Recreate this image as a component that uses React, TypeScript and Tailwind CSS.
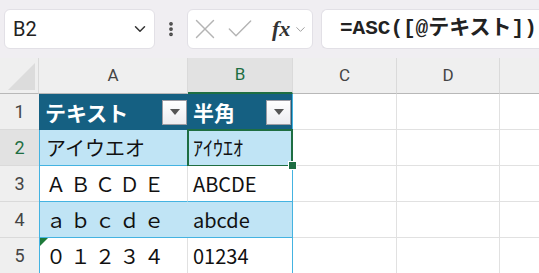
import { ChevronDown, EllipsisVertical, X, Check } from "lucide-react";

const jp = "font-['Noto_Sans_CJK_JP','Noto_Sans',sans-serif]";
const ui = "font-['Roboto','Noto_Sans',sans-serif]";

const rows = [
  { a: "アイウエオ", b: "ｱｲｳｴｵ", band: true },
  { a: "Ａ Ｂ Ｃ Ｄ Ｅ", b: "ABCDE", band: false },
  { a: "ａ ｂ ｃ ｄ ｅ", b: "abcde", band: true },
  { a: "０ １ ２ ３ ４", b: "01234", band: false },
];

function FilterButton() {
  return (
    <div className="w-[25px] h-[25px] border border-[#9c9ca4] bg-gradient-to-b from-white to-[#ececf0] flex items-center justify-center shrink-0">
      <svg width="10" height="6" viewBox="0 0 10 6">
        <path d="M0 0 L10 0 L5 6 Z" fill="#555" />
      </svg>
    </div>
  );
}

function Toolbar() {
  return (
    <div className="h-[58px] bg-[#f0eef2] flex items-center pl-1">
      {/* Name box */}
      <div className="w-[151px] h-[40px] shrink-0 bg-white rounded-md border border-[#e2e0e6] flex items-center justify-between pl-2 pr-[5px]">
        <span className={`${ui} text-[20px] text-[#222]`}>B2</span>
        <ChevronDown size={18} strokeWidth={2} className="text-[#333]" />
      </div>
      <EllipsisVertical size={18} strokeWidth={3} className="text-[#444] ml-[7px] shrink-0" />
      {/* Cancel / enter / fx */}
      <div className="w-[126px] h-[40px] ml-[7px] bg-white rounded-md border border-[#e2e0e6] flex items-center shrink-0">
        <X size={34} strokeWidth={1} className="text-[#b4b4b4] shrink-0" />
        <Check size={32} strokeWidth={1.05} className="text-[#b4b4b4] ml-[2px] shrink-0" />
        <span className="font-['Liberation_Serif',serif] italic font-bold text-[22px] text-[#333] ml-[16px] leading-none">fx</span>
        <ChevronDown size={15} strokeWidth={1.5} className="text-[#999] ml-[3px] shrink-0" />
      </div>
      {/* Formula bar */}
      <div className="flex-1 h-[40px] ml-[8px] bg-white rounded-l-md border border-r-0 border-[#e2e0e6] flex items-center pl-[18px] overflow-hidden">
        <span className="font-['Liberation_Mono','Noto_Sans_CJK_JP',monospace] font-semibold text-[21px] text-[#222] whitespace-nowrap">
          =ASC([@テキスト])
        </span>
      </div>
    </div>
  );
}

function ColumnHeaders() {
  const cols = [
    { l: "A", w: "w-[149px]", active: false },
    { l: "B", w: "w-[105px]", active: true },
    { l: "C", w: "w-[104px]", active: false },
    { l: "D", w: "w-[103px]", active: false },
  ];
  return (
    <div className={`flex h-[36px] bg-[#efefef] ${ui}`}>
      <div className="w-[39px] shrink-0 border-r border-[#dadada] border-b border-b-[#b8b8b8] flex items-end justify-end pr-[3px] pb-[3px]">
        <svg width="27" height="27" viewBox="0 0 27 27">
          <path d="M27 0 L27 27 L0 27 Z" fill="#dcdcdc" />
        </svg>
      </div>
      {cols.map((c) => (
        <div
          key={c.l}
          className={`${c.w} shrink-0 border-r border-[#dadada] flex items-center justify-center text-[17px] ${
            c.active
              ? "bg-[#e2e2e2] text-[#1e6e42] border-b-2 border-b-[#1e6e42]"
              : "text-[#444] border-b border-b-[#b8b8b8]"
          }`}
        >
          {c.l}
        </div>
      ))}
      <div className="flex-1 border-b border-b-[#b8b8b8]" />
    </div>
  );
}

function RowHeader({ n, active }: { n: number; active?: boolean }) {
  return (
    <div
      className={`w-[39px] shrink-0 flex items-center justify-center text-[18px] ${ui} border-b border-[#dadada] ${
        active ? "bg-[#e2e2e2] text-[#1e6e42]" : "bg-[#efefef] text-[#444]"
      }`}
    >
      {n}
    </div>
  );
}

function EmptyCells() {
  return (
    <>
      <div className="w-[104px] shrink-0 border-r border-b border-[#e1e1e1]" />
      <div className="w-[103px] shrink-0 border-r border-b border-[#e1e1e1]" />
      <div className="flex-1 border-b border-[#e1e1e1]" />
    </>
  );
}

export default function App() {
  return (
    <div className="w-[539px] h-[273px] overflow-hidden bg-white">
      <Toolbar />
      <ColumnHeaders />

      {/* Row 1: table header */}
      <div className="flex h-[36px]">
        <RowHeader n={1} />
        <div className={`w-[149px] shrink-0 bg-[#156082] flex items-center justify-between pl-[6px] pr-[1px] ${jp}`}>
          <span className="text-white font-bold text-[21px] leading-none">テキスト</span>
          <FilterButton />
        </div>
        <div className={`w-[105px] shrink-0 bg-[#156082] flex items-center justify-between pl-[5px] pr-[1px] border-r border-[#44b3e1] ${jp}`}>
          <span className="text-white font-bold text-[21px] leading-none">半角</span>
          <FilterButton />
        </div>
        <EmptyCells />
      </div>

      {rows.map((r, i) => {
        const active = i === 0;
        return (
          <div key={i} className="flex h-[36px]">
            <RowHeader n={i + 2} active={active} />
            <div
              className={`relative w-[149px] shrink-0 border-l border-[#44b3e1] border-b border-b-[#44b3e1] flex items-center pl-[6px] ${jp} text-[20px] text-[#111] ${
                r.band ? "bg-[#c0e4f5]" : "bg-white border-r border-r-[#e1e1e1]"
              }`}
            >
              <span className="leading-none whitespace-pre">{r.a}</span>
              {i === 3 && (
                <svg className="absolute left-0 top-0" width="8" height="8" viewBox="0 0 8 8">
                  <path d="M0 0 L8 0 L0 8 Z" fill="#1e7a3a" />
                </svg>
              )}
            </div>
            <div
              className={`relative w-[105px] shrink-0 border-r border-[#44b3e1] border-b border-b-[#44b3e1] flex items-center pl-[5px] ${jp} text-[20px] text-[#111] ${
                r.band ? "bg-[#c0e4f5]" : "bg-white"
              }`}
            >
              <span className="leading-none">{r.b}</span>
              {active && (
                <>
                  <div className="absolute -left-[1px] -top-[1px] w-[106px] h-[38px] border-2 border-[#1e6e42] pointer-events-none" />
                  <div className="absolute -right-[5px] -bottom-[5px] w-[9px] h-[9px] bg-[#1e6e42] border border-white z-10" />
                </>
              )}
            </div>
            <EmptyCells />
          </div>
        );
      })}
    </div>
  );
}
